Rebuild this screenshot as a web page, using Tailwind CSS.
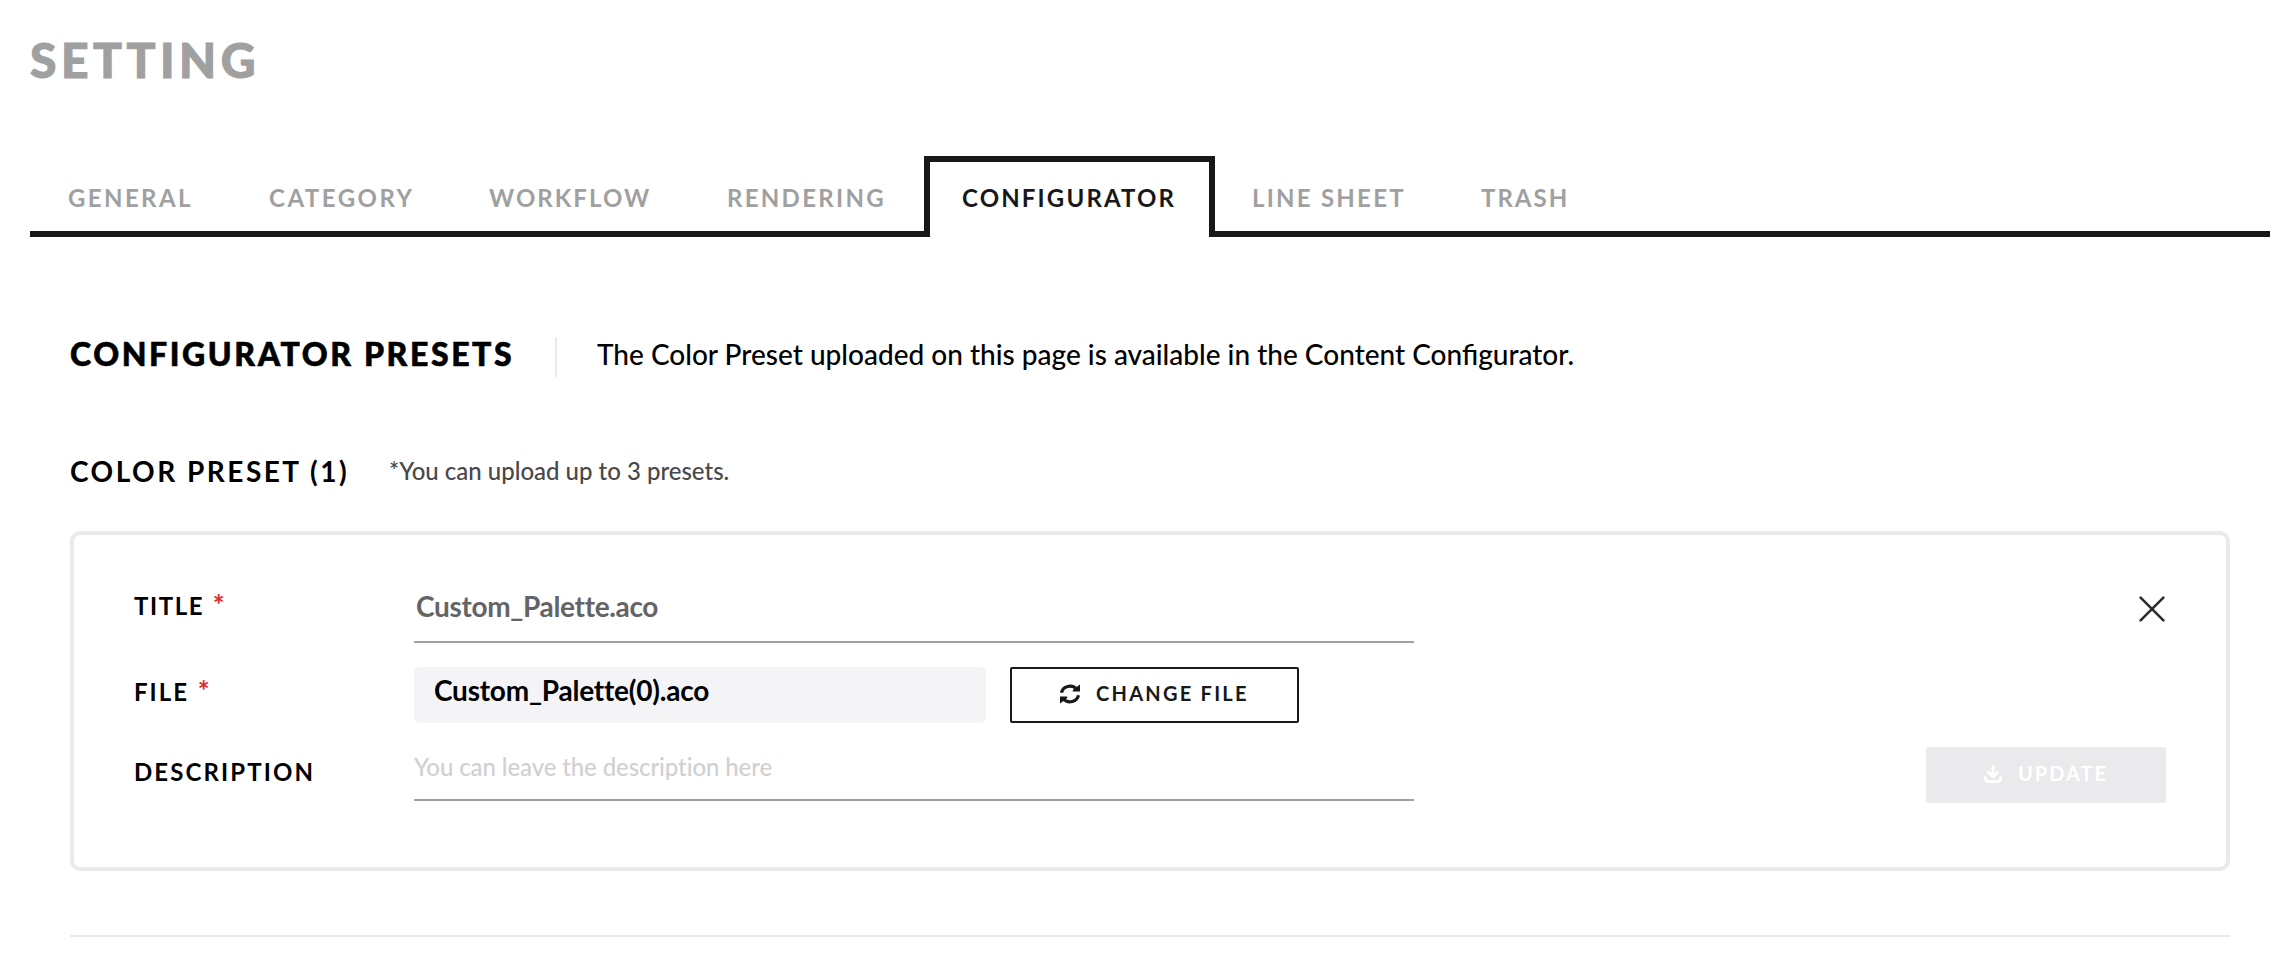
<!doctype html>
<html lang="en">
  <head>
    <meta charset="utf-8" />
    <meta name="viewport" content="width=device-width, initial-scale=1" />
    <title>Setting – Configurator</title>
    <script src="https://cdn.jsdelivr.net/npm/@tailwindcss/browser@4"></script>
  </head>

  <body class="bg-white font-['Lato',sans-serif] text-black antialiased">
    <main class="pt-[30px] pr-[18px] pl-[30px]">
      <h1 class="text-[48px] leading-[60px] font-black tracking-[4.5px] text-[#a0a0a1] [-webkit-text-stroke:1px]">SETTING</h1>

      <!-- Tabs -->
      <nav class="mt-[66px] flex h-[81px] text-2xl leading-6 font-bold whitespace-nowrap text-[#a0a0a1]">
        <a href="#" class="w-[201px] border-b-6 border-[#18181a] pt-[30px] pl-[38px] tracking-[2.4px]">GENERAL</a>
        <a href="#" class="w-[220px] border-b-6 border-[#18181a] pt-[30px] pl-[38px] tracking-[2.5px]">CATEGORY</a>
        <a href="#" class="w-[238px] border-b-6 border-[#18181a] pt-[30px] pl-[38px] tracking-[2.05px]">WORKFLOW</a>
        <a href="#" class="w-[235px] border-b-6 border-[#18181a] pt-[30px] pl-[38px] tracking-[2.3px]">RENDERING</a>
        <a href="#" class="w-[291px] border-x-6 border-t-6 border-[#18181a] pt-[24px] pl-8 tracking-[2.15px] text-[#18181a]">CONFIGURATOR</a>
        <a href="#" class="w-[228px] border-b-6 border-[#18181a] pt-[30px] pl-[37px] tracking-[2.25px]">LINE SHEET</a>
        <a href="#" class="flex-1 border-b-6 border-[#18181a] pt-[30px] pl-[38px] tracking-[2px]">TRASH</a>
      </nav>

      <section class="mt-[100px] px-10">
        <div class="flex h-10 items-start">
          <h2 class="w-[485px] text-[32px] leading-[34px] font-black tracking-[2.6px] [-webkit-text-stroke:0.6px]">CONFIGURATOR PRESETS</h2>
          <div class="h-10 w-0.5 bg-[#eaeaec]"></div>
          <p class="ml-10 text-[28px] leading-[34px] font-medium">
            The Color Preset uploaded on this page is available in the Content Configurator.
          </p>
        </div>

        <div class="mt-[78px] flex h-8 items-center">
          <h3 class="w-[319px] text-[28px] leading-8 font-bold tracking-[2.5px]">COLOR PRESET (1)</h3>
          <p class="text-2xl leading-8 font-medium text-[#48484a]">*You can upload up to 3 presets.</p>
        </div>

        <!-- Preset card -->
        <div class="mt-11 flex h-[340px] justify-between rounded-[10px] border-4 border-[#eaeaec] px-[60px] pt-[46px]">
          <form>
            <div class="flex">
              <label class="w-[280px] text-2xl leading-[50px] font-bold tracking-[1.6px]">TITLE <span class="ml-px text-[28px] leading-6 text-[#e02d2d]">*</span></label>
              <input
                type="text"
                value="Custom_Palette.aco"
                class="h-[62px] w-[1000px] border-b-2 border-[#a0a0a1] pb-[11px] pl-0.5 text-[28px] font-bold tracking-[-0.33px] text-[#646466]"
              />
            </div>
            <div class="mt-6 flex">
              <label class="w-[280px] text-2xl leading-[50px] font-bold tracking-[2px]">FILE <span class="ml-px text-[28px] leading-6 text-[#e02d2d]">*</span></label>
              <div class="h-14 w-[572px] rounded-md bg-[#f4f4f7] pl-5 text-[28px] leading-[47px] font-bold tracking-[-0.22px]">Custom_Palette(0).aco</div>
              <button type="button" class="ml-6 flex h-14 w-[289px] items-center rounded-xs border-2 border-[#18181a] pb-0.5 pl-12 text-xl leading-5 font-bold tracking-[2.25px] text-[#18181a]">
                <svg class="size-5" viewBox="0 0 20 20" fill="none">
                  <path d="M1.5 8.8A8.6 8 0 0 1 16.5 5M18.5 11.2A8.6 8 0 0 1 3.5 15" stroke="currentColor" stroke-width="3.2" />
                  <path d="M20 .4v7.1h-7.2V6l4.4-3.6zM0 19.6v-7.1h7.2V14l-4.4 3.6z" fill="currentColor" />
                </svg>
                <span class="-mt-0.5 ml-4">CHANGE FILE</span>
              </button>
            </div>
            <div class="mt-6 flex">
              <label class="w-[280px] text-2xl leading-[50px] font-bold tracking-[2.1px]">DESCRIPTION</label>
              <input
                type="text"
                placeholder="You can leave the description here"
                class="h-[54px] w-[1000px] border-b-2 border-[#a0a0a1] pb-[14px] text-2xl font-medium tracking-[-0.1px] placeholder:text-[#d0d0d2]"
              />
            </div>
          </form>

          <div class="flex h-[222px] flex-col items-end justify-between">
            <button type="button" class="mt-[15px]" aria-label="Remove">
              <svg class="h-[26px] w-7" viewBox="0 0 28 26" fill="none" stroke="#2c2c2e" stroke-width="2.6" stroke-linecap="round">
                <path d="M2.6 1.6 25.4 24.4M25.4 1.6 2.6 24.4" />
              </svg>
            </button>
            <button type="button" class="flex h-14 w-60 items-center rounded-xs bg-[#eaeaec] pb-0.5 pl-[58px] text-xl leading-5 font-bold tracking-[2px] text-white">
              <svg class="size-[18px]" viewBox="0 0 18 18" fill="none" stroke="currentColor" stroke-width="2.8" stroke-linecap="round" stroke-linejoin="round">
                <path d="M9 1.4v10M4.4 7.4 9 11.6l4.6-4.2M1.4 12.6v.9a3 3 0 0 0 3 3h9.2a3 3 0 0 0 3-3v-.9" />
              </svg>
              <span class="-mt-0.5 ml-4">UPDATE</span>
            </button>
          </div>
        </div>

        <hr class="mt-16 border-t-2 border-[#eaeaec]" />
      </section>
    </main>
  </body>
</html>
